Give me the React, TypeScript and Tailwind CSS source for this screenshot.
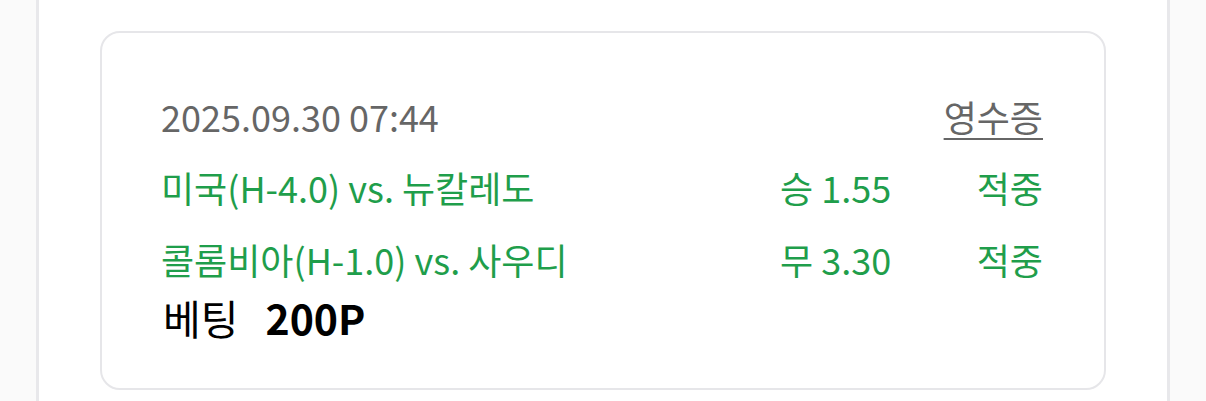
import React from "react";

const font = { fontFamily: '"Noto Sans CJK KR", "Noto Sans", sans-serif' };

function Row({ name, odds, result, className }: { name: string; odds: string; result: string; className: string }) {
  return (
    <div className={`flex items-center text-[36px] leading-[49px] text-[#1f9e4b] ${className}`}>
      <div className="flex-1">{name}</div>
      <div className="w-[193px]">{odds}</div>
      <div className="w-[70px] text-right">{result}</div>
    </div>
  );
}

export default function App() {
  return (
    <div className="w-[1206px] h-[401px] bg-[#fafafa] overflow-hidden px-[36px]" style={font}>
      <div className="h-full bg-white border-x-[3px] border-[#e8e8eb] px-[61px] pt-[31px]">
        <div className="rounded-[20px] border-2 border-[#e6e6e9] pl-[59px] pr-[61px] pt-[59px] pb-[46px]">
          <div className="flex items-center justify-between text-[36px] leading-[49px] text-[#666666]">
            <span>2025.09.30 07:44</span>
            <span className="underline underline-offset-[6px] decoration-2">영수증</span>
          </div>
          <Row className="mt-[22px]" name="미국(H-4.0) vs. 뉴칼레도" odds="승 1.55" result="적중" />
          <Row className="mt-[23px]" name="콜롬비아(H-1.0) vs. 사우디" odds="무 3.30" result="적중" />
          <div className="mt-[9px] flex items-center text-[41px] leading-[49px] text-black">
            <span className="pl-[2px]">베팅</span>
            <span className="ml-[27px] font-bold">200P</span>
          </div>
        </div>
      </div>
    </div>
  );
}
